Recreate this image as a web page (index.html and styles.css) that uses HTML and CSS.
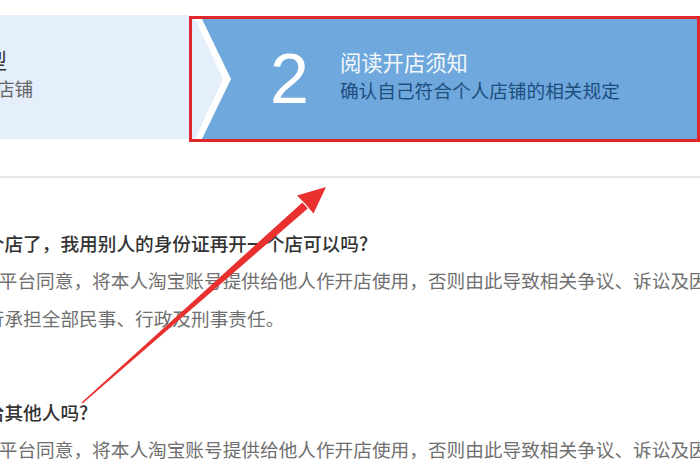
FILE: index.html
```html
<!DOCTYPE html>
<html lang="zh-CN">
<head>
<meta charset="utf-8">
<title>开店须知</title>
<link rel="stylesheet" href="styles.css">
</head>
<body>
<div class="page">
  <div class="steps">
    <div class="step step-done">
      <div class="step-text">
        <div class="step-title">选择开店类型</div>
        <div class="step-sub">开设淘宝个人店铺</div>
      </div>
    </div>
    <div class="step step-active">
      <svg class="chev" viewBox="0 0 40 120" preserveAspectRatio="none">
        <polygon points="0,0 10,0 39,60 10,120 0,120" fill="#ffffff"/>
        <polygon points="0,0 3,0 31,60 3,120 0,120" fill="#e4effb"/>
      </svg>
      <div class="step-num">2</div>
      <div class="step-text">
        <div class="step-title">阅读开店须知</div>
        <div class="step-sub">确认自己符合个人店铺的相关规定</div>
      </div>
    </div>
  </div>
  <div class="divider"></div>
  <div class="faq">
    <div class="faq-item">
      <div class="q">我已开了一个店了，我用别人的身份证再开一个店可以吗?</div>
      <div class="a a-lead">用户若未经平台同意，将本人淘宝账号提供给他人作开店使用，否则由此导致相关争议、诉讼及因此产生的后果，</div>
      <div class="a">并由本人自行承担全部民事、行政及刑事责任。</div>
    </div>
    <div class="faq-item">
      <div class="q">店铺能转让给其他人吗?</div>
      <div class="a a-lead">用户若未经平台同意，将本人淘宝账号提供给他人作开店使用，否则由此导致相关争议、诉讼及因此产生的后果，</div>
    </div>
  </div>
  <svg class="arrow" viewBox="0 0 700 470" width="700" height="470">
    <polygon points="81.5,402.4 302.4,202.5 307.8,208.5 82.5,403.6" fill="#e8302e"/>
    <polygon points="326,187 297,195.5 305,203.5 313.5,213.5" fill="#e8302e"/>
  </svg>
</div>
</body>
</html>
```

FILE: styles.css
```css
body {
  margin: 0;
  background: #ffffff;
  font-family: "Noto Sans CJK SC", sans-serif;
}

.page {
  position: relative;
  width: 700px;
  height: 470px;
  padding-top: 15px;
  box-sizing: border-box;
  overflow: hidden;
}

.steps {
  display: flex;
  align-items: flex-start;
  height: 127px;
}

.step-done {
  flex-shrink: 0;
  width: 189px;
  height: 124px;
  background: #e4effb;
  display: flex;
  align-items: center;
  overflow: hidden;
}

.step-done .step-text {
  flex-shrink: 0;
  margin-left: -116px;
}

.step-done .step-title {
  margin-left: -5px;
}

.step-active {
  flex: 1;
  margin-top: 1px;
  height: 126px;
  box-sizing: border-box;
  border: 3px solid #e0282c;
  background: #6fa8dc;
  display: flex;
  align-items: center;
}

.chev {
  display: block;
  flex-shrink: 0;
  width: 40px;
  height: 120px;
}

.step-num {
  font-family: "Liberation Sans", Arial, sans-serif;
  font-size: 70px;
  line-height: 70px;
  color: #ffffff;
  margin-left: 38px;
}

.step-active .step-text {
  margin-left: 31px;
}

.step-text {
  padding-bottom: 7px;
  white-space: nowrap;
}

.step-title {
  font-size: 21.33px;
  line-height: 28px;
}

.step-sub {
  font-size: 18.67px;
  line-height: 28px;
}

.step-done .step-title { color: #333333; }
.step-done .step-sub { color: #666666; }
.step-active .step-title { color: #f4f8fc; }
.step-active .step-sub { color: #1d4e7e; }

.divider {
  margin-top: 34px;
  border-top: 2px solid #e5e5e5;
}

.faq {
  margin-top: 46px;
  margin-left: -107.5px;
  font-size: 18.67px;
  line-height: 37.33px;
}

.faq-item + .faq-item {
  margin-top: 57px;
}

.q, .a {
  white-space: nowrap;
}

.q {
  color: #333333;
  font-weight: 500;
}

.a {
  color: #707070;
}

.a-lead {
  text-indent: 13px;
}

.arrow {
  position: absolute;
  left: 0;
  top: 0;
  pointer-events: none;
}
```
